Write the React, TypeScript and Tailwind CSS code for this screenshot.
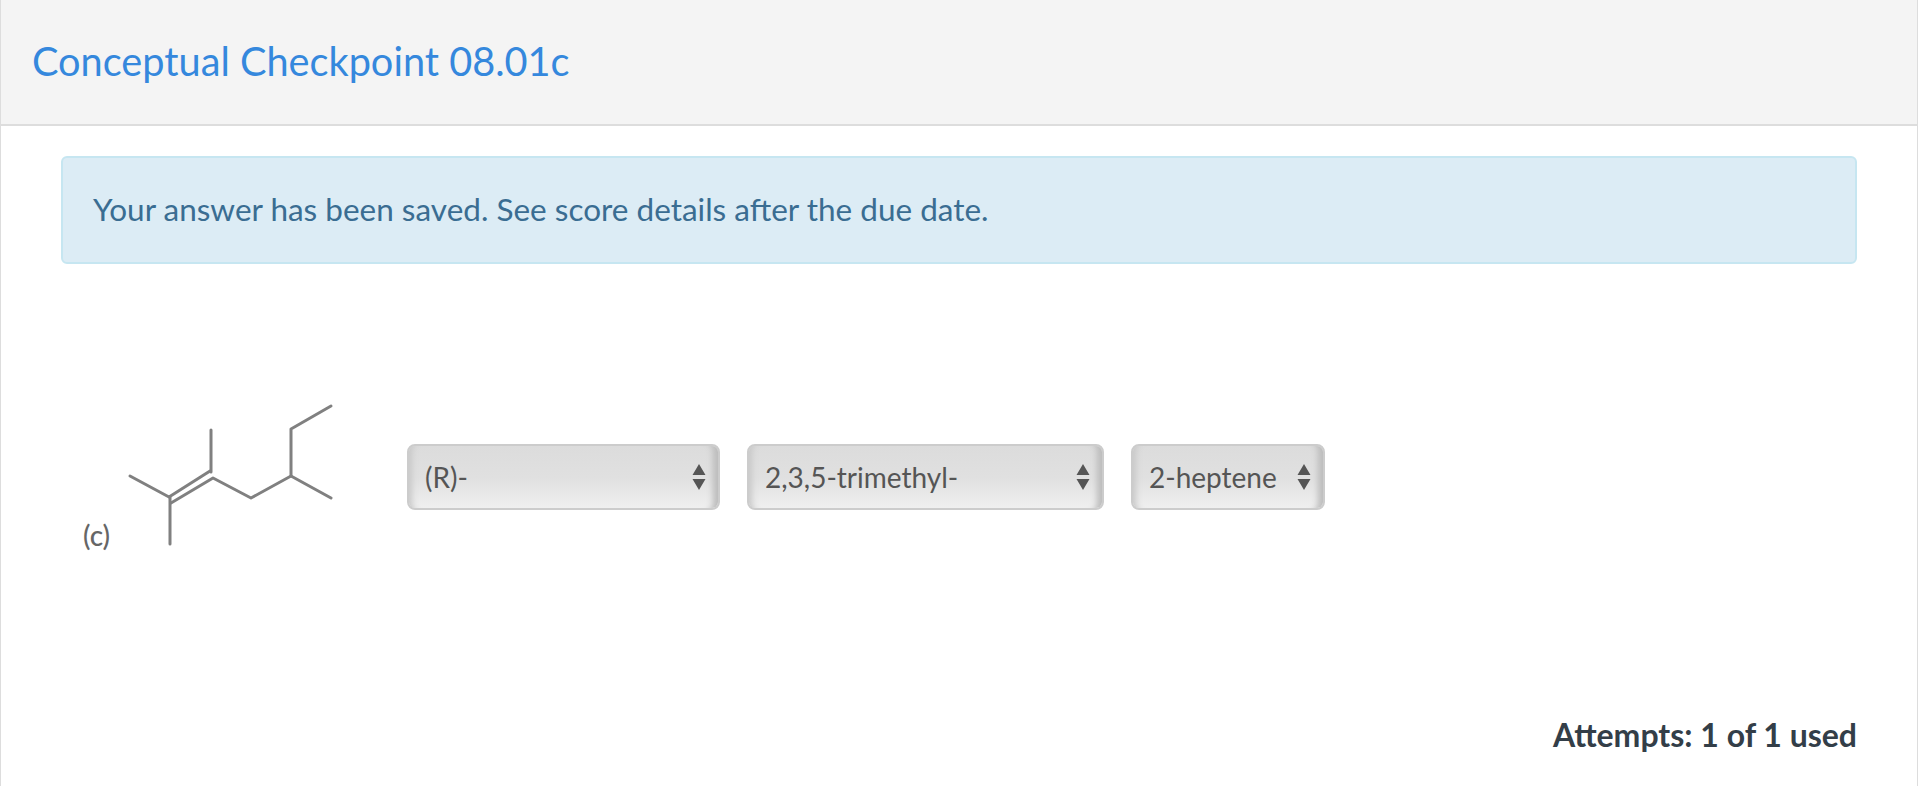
import React from 'react';

const Stepper = () => (
  <svg className="absolute right-[14px] top-[20px] pointer-events-none" width="14" height="26" viewBox="0 0 14 26">
    <path d="M7 0 L13.5 11 L0.5 11 Z M0.5 15 L13.5 15 L7 26 Z" fill="#555555" />
  </svg>
);

const Dropdown: React.FC<{ value: string; width: string }> = ({ value, width }) => (
  <div className={`relative h-[66px] ${width}`}>
    <select
      defaultValue={value}
      className="appearance-none w-full h-full pl-[16px] pr-[40px] rounded-[8px] border-2 border-[#cccccc] text-[28px] text-[#555555] bg-gradient-to-b from-[#dcdcdc] via-[#e0e0e0] to-[#efefef] shadow-[inset_10px_0_6px_-7px_#c8c8c8,inset_-12px_0_6px_-7px_#bcbcbc]"
    >
      <option>{value}</option>
    </select>
    <Stepper />
  </div>
);

const Molecule = () => (
  <svg width="300" height="190" viewBox="0 0 300 190" className="shrink-0">
    <g stroke="#808080" strokeWidth="3" fill="none" strokeLinecap="round" strokeLinejoin="round">
      <path d="M60 96 L99 117 L140 91" />
      <path d="M101 123 L143 98 L181 118 L221 96 L261 118" />
      <path d="M221 96 L221 49 L261 26" />
      <path d="M141 92 L141 50" />
      <path d="M100 117 L100 164" />
    </g>
    <text x="13" y="166" fontSize="28" fontWeight="500" fill="#666666" fontFamily="Lato, sans-serif">(c)</text>
  </svg>
);

export default function App() {
  return (
    <div className="min-h-[786px] bg-white border-x border-[#dddddd] font-['Lato','Liberation_Sans',sans-serif]">
      {/* Header */}
      <div className="h-[126px] bg-[#f4f4f4] border-b-2 border-[#dddddd] flex items-center pl-[31px] pb-[2px]">
        <h1 className="text-[39.7px] text-[#3588dd] font-normal">Conceptual Checkpoint 08.01c</h1>
      </div>

      {/* Saved message */}
      <div className="mt-[30px] mx-[60px] h-[108px] flex items-center px-[30px] bg-[#dcecf5] border-2 border-[#c6e6f1] rounded-[6px]">
        <p className="text-[31.5px] text-[#3a6d92]">Your answer has been saved. See score details after the due date.</p>
      </div>

      {/* Question */}
      <div className="mt-[116px] ml-[69px] flex items-start">
        <Molecule />
        <div className="flex gap-[27px] ml-[37px] mt-[64px]">
          <Dropdown value="(R)-" width="w-[313px]" />
          <Dropdown value="2,3,5-trimethyl-" width="w-[357px]" />
          <Dropdown value="2-heptene" width="w-[194px]" />
        </div>
      </div>

      <div className="mt-[141px] pr-[60px] text-right text-[32px] font-bold text-[#333e48]">Attempts: 1 of 1 used</div>
    </div>
  );
}
